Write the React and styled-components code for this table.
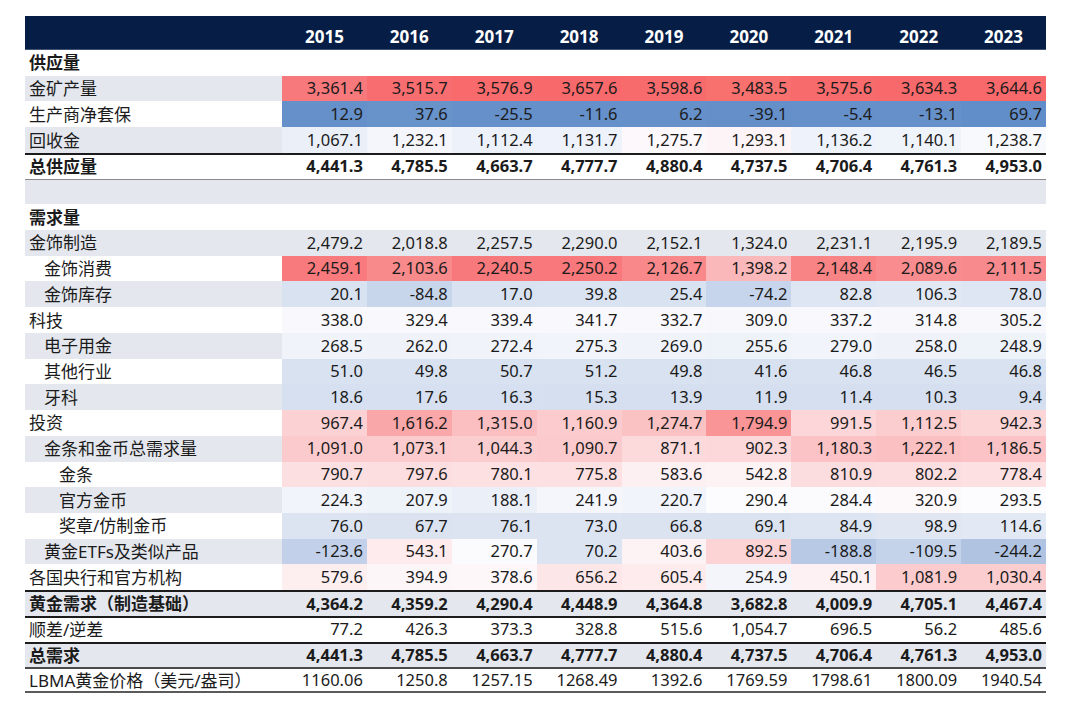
import styled, { createGlobalStyle } from "styled-components";

const GlobalStyle = createGlobalStyle`
  body {
    margin: 0;
    background: #ffffff;
    font-family: "Noto Sans", "Noto Sans CJK SC", sans-serif;
    color: #1b1b1b;
  }
`;

const years = [2015, 2016, 2017, 2018, 2019, 2020, 2021, 2022, 2023];

// heat colours copied by eye from the reference, null = row background
const rows = [
  { label: "供应量", bold: true, band: false, type: "title" },
  {
    label: "金矿产量",
    band: true,
    values: ["3,361.4", "3,515.7", "3,576.9", "3,657.6", "3,598.6", "3,483.5", "3,575.6", "3,634.3", "3,644.6"],
    heat: ["#f7797c", "#f86e70", "#f86a6c", "#f8696b", "#f86b6d", "#f8716f", "#f86b6d", "#f8696b", "#f8696b"],
  },
  {
    label: "生产商净套保",
    band: false,
    values: ["12.9", "37.6", "-25.5", "-11.6", "6.2", "-39.1", "-5.4", "-13.1", "69.7"],
    heat: ["#6690c9", "#6892ca", "#6690c9", "#6690c9", "#6690c9", "#648fc9", "#6690c9", "#6690c9", "#618dc8"],
  },
  {
    label: "回收金",
    band: true,
    values: ["1,067.1", "1,232.1", "1,112.4", "1,131.7", "1,275.7", "1,293.1", "1,136.2", "1,140.1", "1,238.7"],
    heat: ["#eaeff8", "#f4f6fb", "#edf1f9", "#eef2fa", "#fcf8fb", "#fcf4f6", "#eef2fa", "#eff3fa", "#f8f9fc"],
  },
  {
    label: "总供应量",
    bold: true,
    band: false,
    rule: "top",
    values: ["4,441.3", "4,785.5", "4,663.7", "4,777.7", "4,880.4", "4,737.5", "4,706.4", "4,761.3", "4,953.0"],
  },
  { label: "", band: true, type: "spacer" },
  { label: "需求量", bold: true, band: false, type: "title" },
  {
    label: "金饰制造",
    band: true,
    values: ["2,479.2", "2,018.8", "2,257.5", "2,290.0", "2,152.1", "1,324.0", "2,231.1", "2,195.9", "2,189.5"],
  },
  {
    label: "金饰消费",
    indent: 1,
    band: false,
    values: ["2,459.1", "2,103.6", "2,240.5", "2,250.2", "2,126.7", "1,398.2", "2,148.4", "2,089.6", "2,111.5"],
    heat: ["#f87a7d", "#f88a8c", "#f8797c", "#f8787b", "#f8888a", "#fbb8ba", "#f88486", "#f88c8e", "#f88a8d"],
  },
  {
    label: "金饰库存",
    indent: 1,
    band: true,
    values: ["20.1", "-84.8", "17.0", "39.8", "25.4", "-74.2", "82.8", "106.3", "78.0"],
    heat: ["#d8e2f1", "#c8d6ec", "#d8e2f1", "#dae3f1", "#d8e2f1", "#c6d5eb", "#dfe6f3", "#e1e8f4", "#dfe6f3"],
  },
  {
    label: "科技",
    band: false,
    values: ["338.0", "329.4", "339.4", "341.7", "332.7", "309.0", "337.2", "314.8", "305.2"],
    heat: ["#f9f8fc", "#f9f8fc", "#f9f8fc", "#f9f8fc", "#f9f8fc", "#f8f8fc", "#f9f8fc", "#f8f8fc", "#f8f8fc"],
  },
  {
    label: "电子用金",
    indent: 1,
    band: true,
    values: ["268.5", "262.0", "272.4", "275.3", "269.0", "255.6", "279.0", "258.0", "248.9"],
    heat: ["#f0f3fa", "#eff2f9", "#f0f3fa", "#f1f4fa", "#f0f3fa", "#eef2f9", "#f1f4fa", "#eff2f9", "#eef2f9"],
  },
  {
    label: "其他行业",
    indent: 1,
    band: false,
    values: ["51.0", "49.8", "50.7", "51.2", "49.8", "41.6", "46.8", "46.5", "46.8"],
    heat: ["#d9e2f1", "#d9e2f1", "#d9e2f1", "#d9e2f1", "#d9e2f1", "#d8e1f0", "#d9e2f1", "#d9e2f1", "#d9e2f1"],
  },
  {
    label: "牙科",
    indent: 1,
    band: true,
    values: ["18.6", "17.6", "16.3", "15.3", "13.9", "11.9", "11.4", "10.3", "9.4"],
    heat: ["#d6e0f0", "#d6e0f0", "#d6e0f0", "#d5dfef", "#d5dfef", "#d5dfef", "#d5dfef", "#d5dfef", "#d5dfef"],
  },
  {
    label: "投资",
    band: false,
    values: ["967.4", "1,616.2", "1,315.0", "1,160.9", "1,274.7", "1,794.9", "991.5", "1,112.5", "942.3"],
    heat: ["#fcd1d3", "#f9a7a9", "#fbbfc1", "#fccbcd", "#fbc2c4", "#f99597", "#fcd6d8", "#fccdcf", "#fcd5d7"],
  },
  {
    label: "金条和金币总需求量",
    indent: 1,
    band: true,
    values: ["1,091.0", "1,073.1", "1,044.3", "1,090.7", "871.1", "902.3", "1,180.3", "1,222.1", "1,186.5"],
    heat: ["#fbcacc", "#fccbcd", "#fccdcf", "#fbcacc", "#fcdadc", "#fcd8da", "#fbc3c5", "#fbc0c2", "#fbc3c5"],
  },
  {
    label: "金条",
    indent: 2,
    band: false,
    values: ["790.7", "797.6", "780.1", "775.8", "583.6", "542.8", "810.9", "802.2", "778.4"],
    heat: ["#fcdfe1", "#fcdee0", "#fce0e2", "#fce0e2", "#fdf0f2", "#fdf3f5", "#fcdddf", "#fcdee0", "#fce0e2"],
  },
  {
    label: "官方金币",
    indent: 2,
    band: true,
    values: ["224.3", "207.9", "188.1", "241.9", "220.7", "290.4", "284.4", "320.9", "293.5"],
    heat: ["#f1f4fa", "#eef2f9", "#ebeff8", "#f4f6fb", "#f1f4fa", "#fcfbfd", "#fbfafd", "#fdf9fb", "#fcfbfd"],
  },
  {
    label: "奖章/仿制金币",
    indent: 2,
    band: false,
    values: ["76.0", "67.7", "76.1", "73.0", "66.8", "69.1", "84.9", "98.9", "114.6"],
    heat: ["#dce4f2", "#dbe3f1", "#dce4f2", "#dce4f2", "#dbe3f1", "#dbe3f1", "#dde5f2", "#e0e7f3", "#e2e9f4"],
  },
  {
    label: "黄金ETFs及类似产品",
    indent: 1,
    band: true,
    values: ["-123.6", "543.1", "270.7", "70.2", "403.6", "892.5", "-188.8", "-109.5", "-244.2"],
    heat: ["#c2d1e9", "#fdebed", "#fbfbfd", "#dce4f2", "#fdf2f4", "#fcd4d6", "#b7c9e5", "#c4d3ea", "#b0c4e2"],
  },
  {
    label: "各国央行和官方机构",
    band: false,
    values: ["579.6", "394.9", "378.6", "656.2", "605.4", "254.9", "450.1", "1,081.9", "1,030.4"],
    heat: ["#fdeef0", "#fdf6f8", "#fdf7f9", "#fde6e8", "#fdebed", "#f3f5fb", "#fdf1f3", "#fbcbcd", "#fbcdcf"],
  },
  {
    label: "黄金需求（制造基础）",
    bold: true,
    band: true,
    rule: "top",
    values: ["4,364.2", "4,359.2", "4,290.4", "4,448.9", "4,364.8", "3,682.8", "4,009.9", "4,705.1", "4,467.4"],
  },
  {
    label: "顺差/逆差",
    band: false,
    rule: "top",
    values: ["77.2", "426.3", "373.3", "328.8", "515.6", "1,054.7", "696.5", "56.2", "485.6"],
  },
  {
    label: "总需求",
    bold: true,
    band: true,
    rule: "top",
    values: ["4,441.3", "4,785.5", "4,663.7", "4,777.7", "4,880.4", "4,737.5", "4,706.4", "4,761.3", "4,953.0"],
  },
  {
    label: "LBMA黄金价格（美元/盎司）",
    band: false,
    rule: "soft",
    last: true,
    values: ["1160.06", "1250.8", "1257.15", "1268.49", "1392.6", "1769.59", "1798.61", "1800.09", "1940.54"],
  },
];

const App = () => {
  return (
    <>
      <GlobalStyle />
      <Page>
        <Table>
          <HeadRow>
            <HeadCell />
            {years.map((y) => (
              <HeadCell key={y}>{y}</HeadCell>
            ))}
          </HeadRow>
          {rows.map((row, i) => (
            <Row
              key={i}
              $band={row.band}
              $rule={row.rule}
              $last={row.last}
              $after={rows[i - 1] && rows[i - 1].label === "总供应量"}
            >
              <Label $indent={row.indent || 0} $bold={row.bold}>
                {row.label}
              </Label>
              {row.values
                ? row.values.map((v, j) => (
                    <Cell key={j} $bold={row.bold} $bg={row.heat ? row.heat[j] : null}>
                      {v}
                    </Cell>
                  ))
                : years.map((y) => <Cell key={y} />)}
            </Row>
          ))}
        </Table>
      </Page>
    </>
  );
};

const Page = styled.div`
  padding: 16px 0 0 25px;
`;

const Table = styled.div`
  width: 1021px;
  display: flex;
  flex-direction: column;
`;

const HeadRow = styled.div`
  display: grid;
  grid-template-columns: 257px repeat(9, 1fr);
  height: 34px;
  background: #061e46;
  border-bottom: 1px solid #3d5274;
  box-sizing: border-box;
`;

const HeadCell = styled.div`
  display: flex;
  align-items: center;
  justify-content: center;
  padding-top: 7px;
  color: #ffffff;
  font-weight: 700;
  font-size: 17px;
`;

const ruleColor = {
  top: "#1c1c1c",
  soft: "#4a4a4a",
};

const Row = styled.div`
  display: grid;
  grid-template-columns: 257px repeat(9, 1fr);
  height: 25.72px;
  box-sizing: border-box;
  background: ${(p) => (p.$band ? "#e4e7ed" : "#ffffff")};
  border-top: ${(p) =>
    p.$rule ? `2px solid ${ruleColor[p.$rule]}` : p.$after ? "1px solid #8a8a8a" : "none"};
  border-bottom: ${(p) => (p.$last ? "2px solid #5a5a5a" : "none")};
`;

const Label = styled.div`
  display: flex;
  align-items: center;
  padding-left: ${(p) => 4 + p.$indent * 15}px;
  font-family: "Noto Sans", "Noto Sans CJK SC", sans-serif;
  font-size: 17px;
  font-weight: ${(p) => (p.$bold ? 700 : 400)};
  white-space: nowrap;
  line-height: 1;
`;

const Cell = styled.div`
  display: flex;
  align-items: center;
  justify-content: flex-end;
  padding-right: 4px;
  background: ${(p) => p.$bg || "transparent"};
  font-size: 16.5px;
  font-weight: ${(p) => (p.$bold ? 700 : 400)};
  line-height: 1;
  white-space: nowrap;
`;

export default App;
